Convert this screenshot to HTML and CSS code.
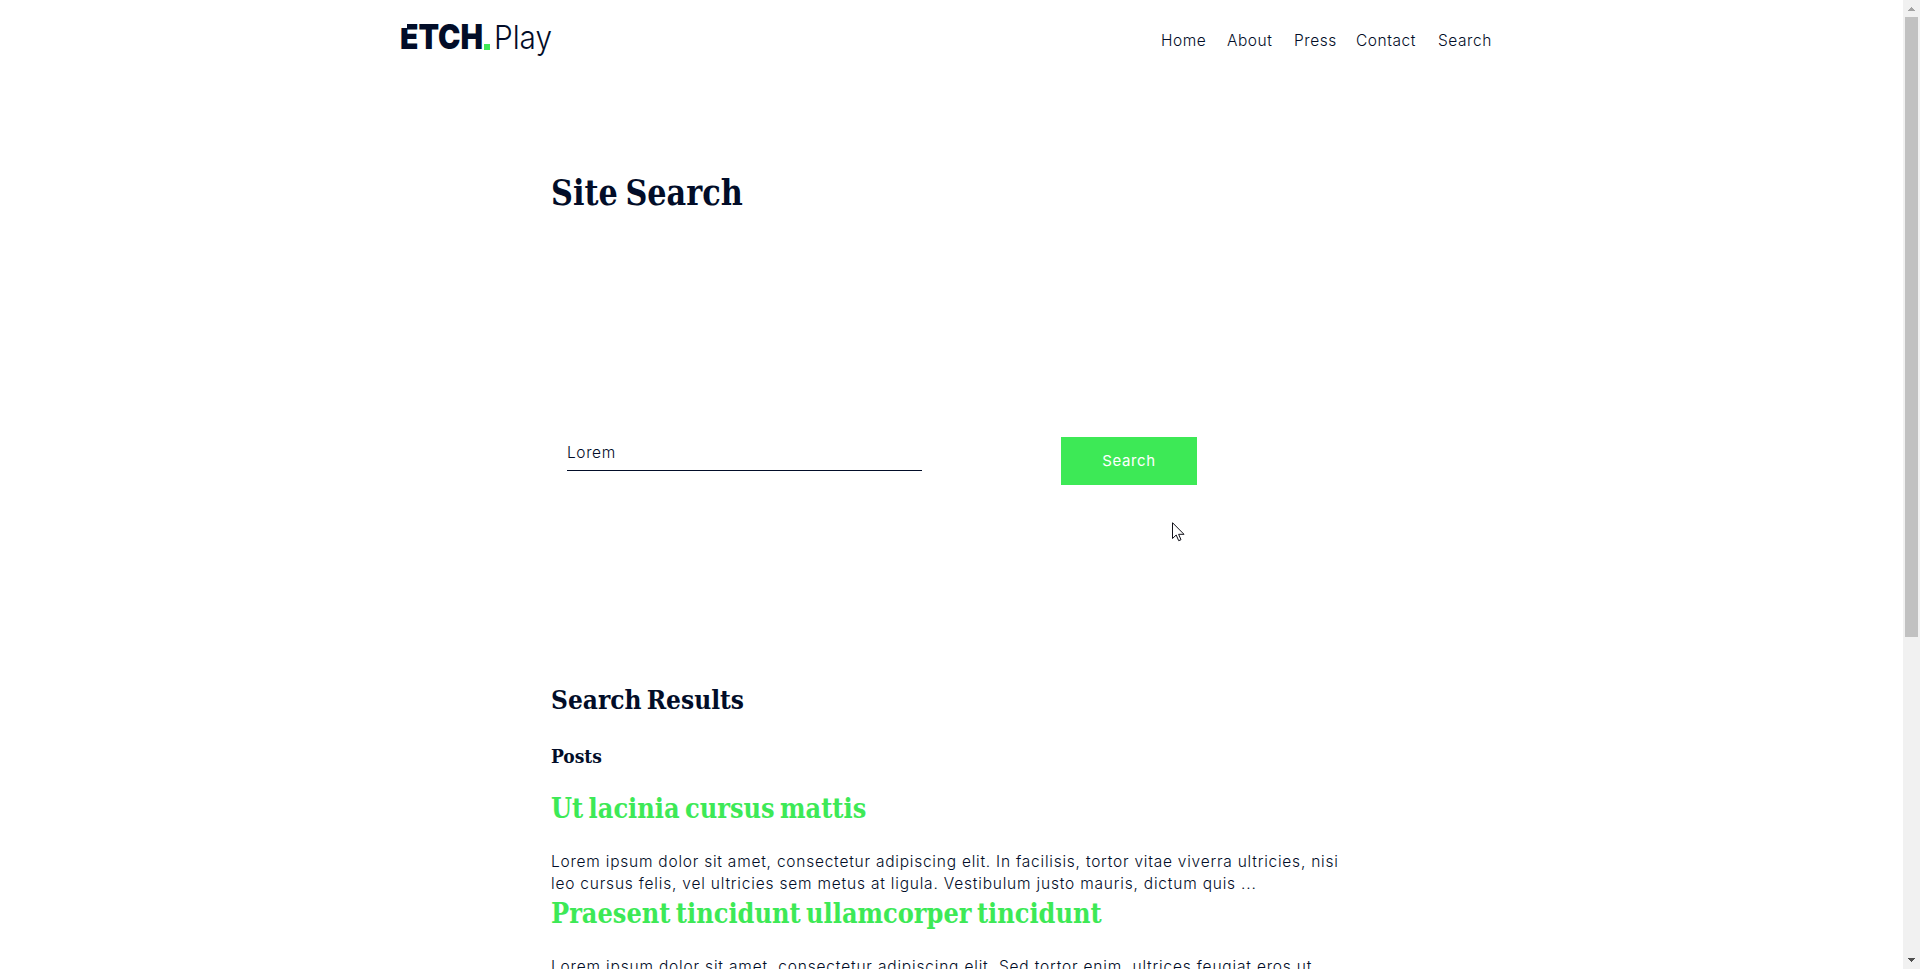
FILE: index.html
```
<!DOCTYPE html>
<html lang="en">
<head>
<meta charset="utf-8">
<title>Site Search - Etch Play</title>
<link rel="stylesheet" href="styles.css">
</head>
<body>
<div class="page">
  <header class="header">
    <svg class="logo" width="156" height="40" viewBox="0 0 156 40" role="img" aria-label="ETCH.Play">
      <text class="logo-bold" x="-1" y="29" textLength="83" lengthAdjust="spacingAndGlyphs">ETCH</text>
      <path d="M0 3h6v5H0z" fill="#fff"/>
      <rect class="logo-dot" x="83" y="24" width="6" height="6"/>
      <text class="logo-light" x="93" y="29" textLength="58" lengthAdjust="spacingAndGlyphs">Play</text>
    </svg>
    <nav class="nav">
      <a class="nav-home">Home</a><a class="nav-about">About</a><a class="nav-press">Press</a><a class="nav-contact">Contact</a><a class="nav-search">Search</a>
    </nav>
  </header>
  <main class="content">
    <h1 class="title">Site Search</h1>
    <form class="form">
      <input class="field" type="text" value="Lorem" aria-label="Search">
      <button class="button" type="button">Search</button>
    </form>
    <h2 class="results">Search Results</h2>
    <h3 class="group">Posts</h3>
    <article class="post">
      <h2 class="post-title">Ut lacinia cursus mattis</h2>
      <p class="excerpt"><span class="line l1">Lorem ipsum dolor sit amet, consectetur adipiscing elit. In facilisis, tortor vitae viverra ultricies, nisi</span>
      <span class="line l2">leo cursus felis, vel ultricies sem metus at ligula. Vestibulum justo mauris, dictum quis ...</span></p>
    </article>
    <article class="post">
      <h2 class="post-title">Praesent tincidunt ullamcorper tincidunt</h2>
      <p class="excerpt"><span class="line l3">Lorem ipsum dolor sit amet, consectetur adipiscing elit. Sed tortor enim, ultrices feugiat eros ut</span></p>
    </article>
  </main>
</div>
<div class="scrollbar">
  <svg width="17" height="17"><path d="M8 7h1v1h1v1h1v1h1v1H5v-1h1V9h1V8h1z" fill="#a3a3a3"/></svg>
  <div class="thumb"></div>
  <svg class="down" width="17" height="17"><path d="M5 6h7v1h-1v1h-1v1H9v1H8V9H7V8H6V7H5z" fill="#505050"/></svg>
</div>
<svg class="cursor" width="14" height="21" viewBox="0 0 14 21"><path d="M.5 .7V16.5L4.2 13l2.5 5.7 2.3-1-2.4-5.4H12z" fill="#fff" stroke="#101018"/></svg>
</body>
</html>
```
FILE: styles.css
```
* { box-sizing: border-box; }
body { margin: 0; height: 969px; overflow: hidden; display: flex; background: #fff; color: #020d28; font: 300 15.5px/22px Inter, "Liberation Sans", sans-serif; }
.page { width: 1903px; height: 969px; overflow: hidden; }
.header { height: 80px; padding: 20px 0 0 401px; display: flex; }
.logo { display: block; flex: none; overflow: visible; }
.logo-bold { font: 900 34px Inter, sans-serif; fill: #020d28; }
.logo-dot { fill: #3de956; }
.logo-light { font: 300 33px Inter, sans-serif; fill: #020d28; }
.nav { display: flex; padding: 10px 0 0 604px; white-space: nowrap; letter-spacing: .55px; }
.nav-home { width: 66px; }
.nav-about { width: 67px; }
.nav-press { width: 62px; }
.nav-contact { width: 82px; }
.content { width: 800px; margin-left: 551px; }
h1, h2, h3, p { margin: 0; white-space: nowrap; }
h1, h2, h3 { font-family: "DejaVu Serif Condensed", "DejaVu Serif", serif; font-stretch: condensed; font-weight: 700; word-spacing: -3px; width: max-content; transform-origin: 0 0; }
.title { font-size: 35px; line-height: 50px; padding-top: 88px; height: 357px; transform: scaleX(.963); }
.form { display: flex; padding-left: 16px; height: 236px; align-items: flex-start; }
.field { width: 355px; height: 34px; border: 0; border-bottom: 1px solid #020d28; padding: 0 0 3px; margin-right: 139px; color: inherit; font: inherit; letter-spacing: .6px; outline: 0; background: #fff; }
.button { width: 136px; height: 48px; padding: 0 0 2px; border: 0; background: #3de956; color: #fff; font: 400 15px Inter, sans-serif; letter-spacing: .6px; }
.results { font-size: 26px; line-height: 54px; height: 66px; }
.group { font-size: 19px; line-height: 34px; height: 50px; }
.post-title { font-size: 27px; line-height: 40px; height: 62px; color: #3de956; transform: scaleX(.993); }
.post { height: 105px; }
.line { display: block; width: max-content; }
.l1 { letter-spacing: .77px; }
.l2 { letter-spacing: .8px; }
.l3 { letter-spacing: .82px; }
.scrollbar { width: 17px; height: 969px; background: #f1f1f1; display: flex; flex-direction: column; }
.scrollbar svg { display: block; flex: none; }
.thumb { width: 13px; height: 620px; margin-left: 2px; background: #c1c1c1; }
.scrollbar .down { margin-top: auto; }
.cursor { position: absolute; left: 1172px; top: 522px; }
```
